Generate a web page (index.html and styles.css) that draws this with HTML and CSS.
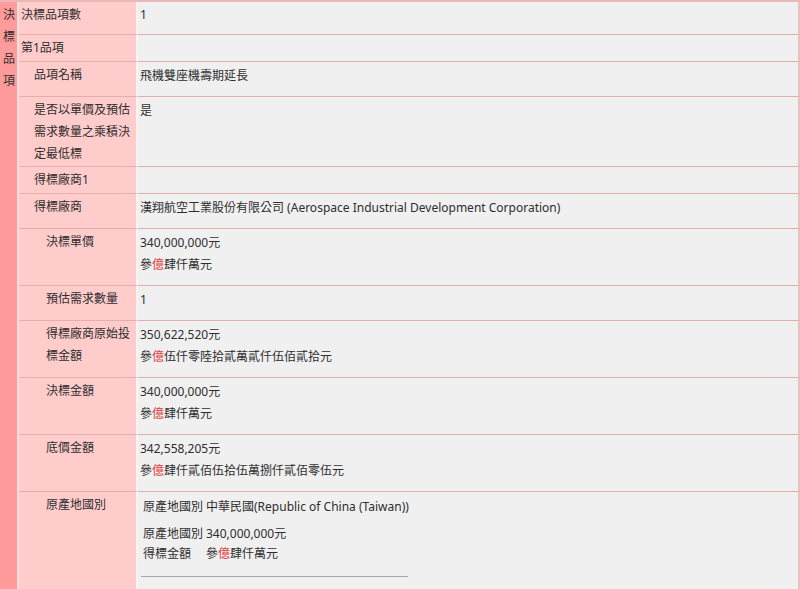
FILE: index.html
```html
<!DOCTYPE html>
<html lang="zh-Hant">
<head>
<meta charset="utf-8">
<title>決標品項</title>
<link rel="stylesheet" href="styles.css">
</head>
<body>
<table class="grid">
  <tr>
    <td class="side" rowspan="12">決標品項</td>
    <td class="lbl">決標品項數</td>
    <td class="val"><div class="v first">1</div></td>
  </tr>
  <tr>
    <td class="lbl">第1品項</td>
    <td class="val blank"></td>
  </tr>
  <tr>
    <td class="lbl in1">品項名稱</td>
    <td class="val"><div class="v">飛機雙座機壽期延長</div></td>
  </tr>
  <tr>
    <td class="lbl in1">是否以單價及預估需求數量之乘積決定最低標</td>
    <td class="val"><div class="v">是</div></td>
  </tr>
  <tr>
    <td class="lbl in1">得標廠商1</td>
    <td class="val blank"></td>
  </tr>
  <tr>
    <td class="lbl in1">得標廠商</td>
    <td class="val"><div class="v">漢翔航空工業股份有限公司 (Aerospace Industrial Development Corporation)</div></td>
  </tr>
  <tr>
    <td class="lbl in2">決標單價</td>
    <td class="val"><div class="v">340,000,000元<br>參<span class="red">億</span>肆仟萬元</div></td>
  </tr>
  <tr>
    <td class="lbl in2">預估需求數量</td>
    <td class="val"><div class="v">1</div></td>
  </tr>
  <tr>
    <td class="lbl in2">得標廠商原始投標金額</td>
    <td class="val"><div class="v">350,622,520元<br>參<span class="red">億</span>伍仟零陸拾貳萬貳仟伍佰貳拾元</div></td>
  </tr>
  <tr>
    <td class="lbl in2">決標金額</td>
    <td class="val"><div class="v">340,000,000元<br>參<span class="red">億</span>肆仟萬元</div></td>
  </tr>
  <tr>
    <td class="lbl in2">底價金額</td>
    <td class="val"><div class="v">342,558,205元<br>參<span class="red">億</span>肆仟貳佰伍拾伍萬捌仟貳佰零伍元</div></td>
  </tr>
  <tr>
    <td class="lbl in2">原產地國別</td>
    <td class="val">
      <div class="origin">
        <div class="orow"><span class="ok">原產地國別</span><span>中華民國(Republic of China (Taiwan))</span></div>
        <div class="ogroup">
          <div class="orow"><span class="ok">原產地國別</span><span>340,000,000元</span></div>
          <div class="orow"><span class="ok">得標金額</span><span>參<span class="red">億</span>肆仟萬元</span></div>
        </div>
        <hr class="rule">
      </div>
    </td>
  </tr>
</table>
</body>
</html>
```
FILE: styles.css
```css
html, body {
  margin: 0;
  padding: 0;
  background: #ffffff;
}
body {
  font-family: "Noto Sans", "Noto Sans CJK TC", sans-serif;
  font-size: 12px;
  line-height: 22px;
  color: #2e2e2e;
}
.grid {
  width: 100%;
  table-layout: fixed;
  border-collapse: separate;
  border-spacing: 0;
  border-top: 2px solid #e9b9b9;
}
.grid td {
  box-sizing: border-box;
  vertical-align: top;
}
.side {
  width: 19px;
  background: #ff9b9b;
  border-right: 2px solid #fcdede;
  padding: 2px 3px 0 3px;
  line-height: 22px;
  word-break: break-all;
}
.lbl {
  width: 119px;
  background: #ffcccc;
  border-right: 2px solid #fbf2f2;
  border-bottom: 1px solid #e4aeae;
  padding: 2px 2px 1px 2px;
}
.in1 { padding-left: 15px; }
.in2 { padding-left: 27px; }
.val {
  background: #f1f0f0;
  border-bottom: 1px solid #e4aeae;
  border-right: 2px solid #eac0c0;
  padding: 0 2px;
}
.blank {
  height: 27px;
}
.v {
  padding: 3px 0 9px 0;
}
.v.first {
  padding: 2px 0 8px 0;
}
.red {
  color: #e0403f;
}
.origin {
  padding: 5px 0 0 3px;
}
.orow {
  display: flex;
  line-height: 20px;
}
.ok {
  width: 63px;
}
.ogroup {
  margin-top: 7px;
}
.rule {
  width: 267px;
  margin: 12px 0 12px -2px;
  border: 0;
  border-top: 1px solid #a8a8a8;
  height: 0;
}
```
